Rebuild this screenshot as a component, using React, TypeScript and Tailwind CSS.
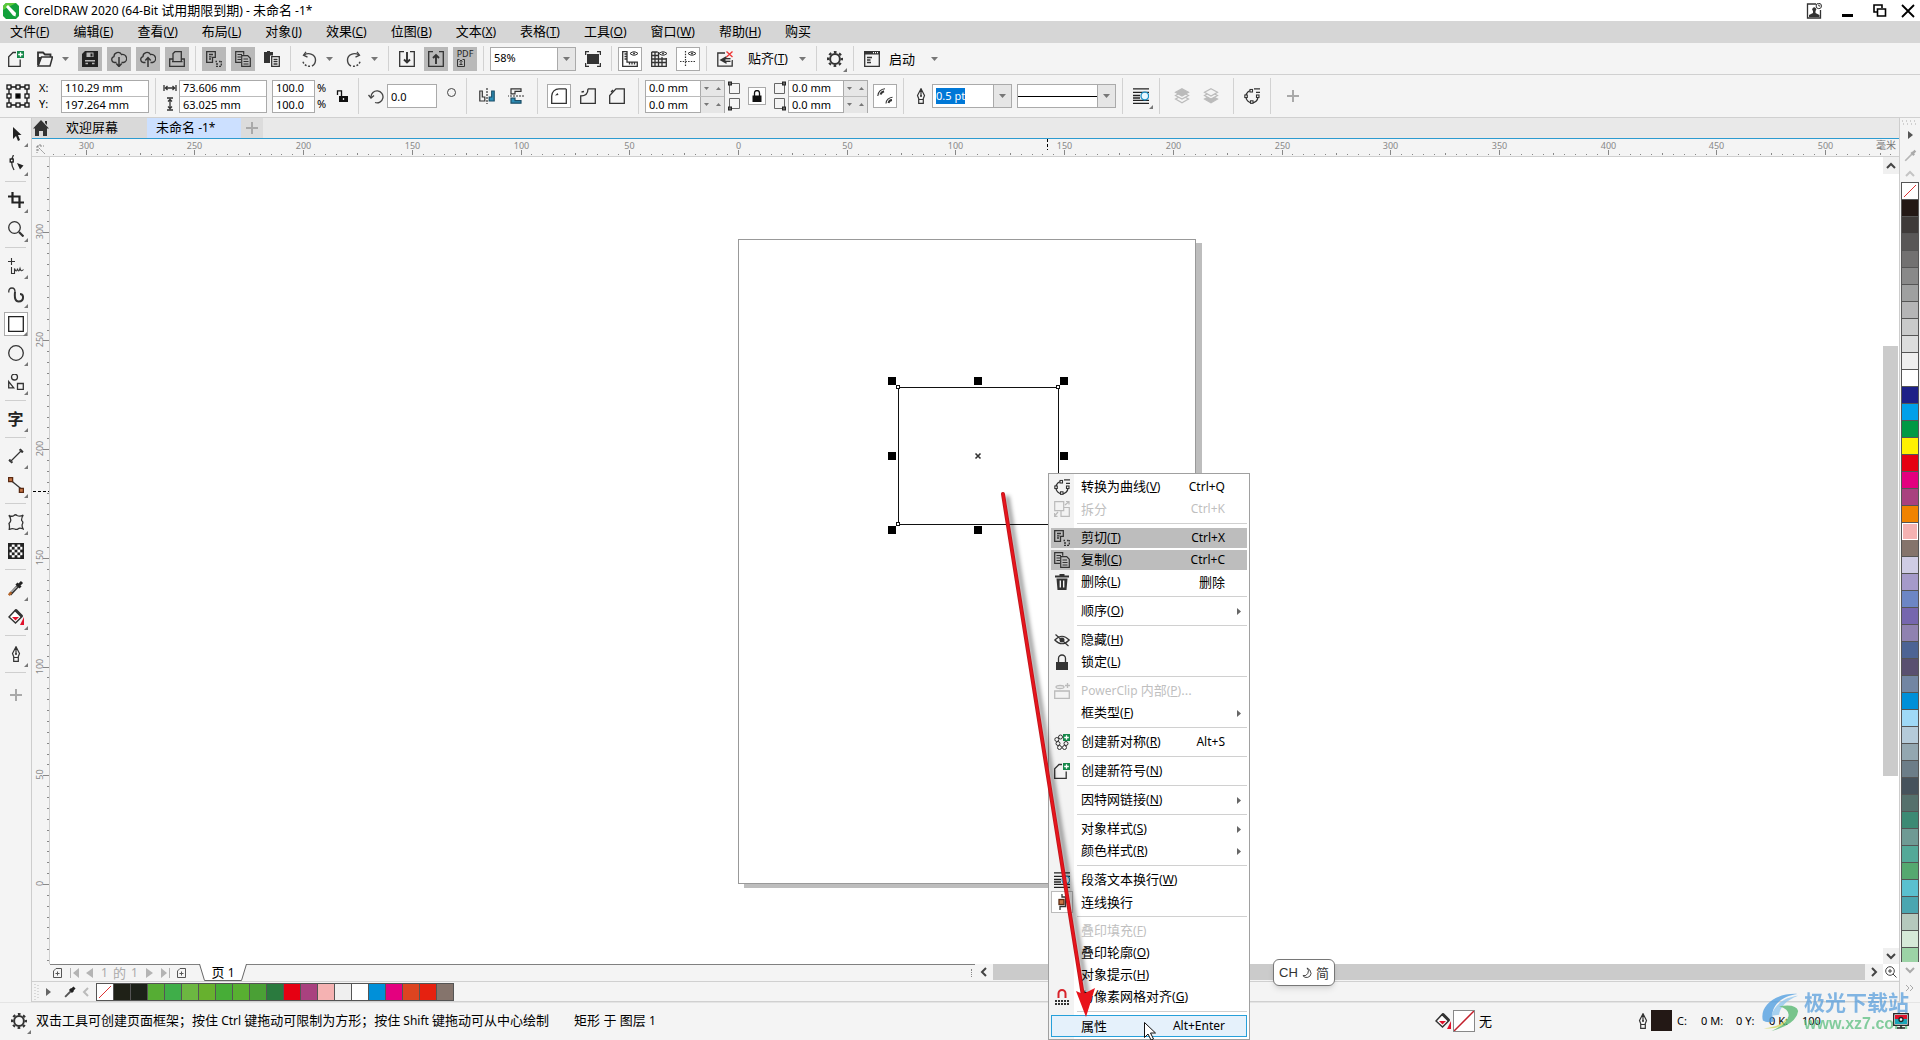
import type { ReactNode } from "react";
import clsx from "clsx";

const DARK = "#333";

function Icon({ size = 16, children }: { size?: number; children: ReactNode }) {
  return (
    <svg
      width={size}
      height={size}
      viewBox={`0 0 ${size} ${size}`}
      fill="none"
      stroke={DARK}
      strokeWidth="1.3"
      className="flex-shrink-0"
      aria-hidden="true"
    >
      {children}
    </svg>
  );
}

function PlusBadge() {
  return (
    <>
      <rect x="9" y="0" width="7" height="7" fill="#16884a" stroke="none" />
      <path d="M12.5 1.2v4.6M10.2 3.5h4.6" stroke="#fff" />
    </>
  );
}

function NewIcon() {
  return (
    <Icon>
      <path d="M8 1.5H5L.7 5.700V15.300h11.500V8.500" />
      <PlusBadge />
    </Icon>
  );
}

function OpenIcon() {
  return (
    <Icon>
      <path d="M1 14V1.5h5l2 2h5.5V6" strokeWidth="1.8" />
      <path d="M1 15L4.5 6H15.5L13 15z" strokeWidth="1.5" />
      <path d="M1 14V6h3.5L2 14z" fill={DARK} stroke="none" />
    </Icon>
  );
}

function SaveIcon() {
  return (
    <Icon>
      <path d="M3 0H16V16H0V3z" fill="#222" stroke="none" />
      <path d="M4.500 1.500h7V6h-7zM3 9h10v1.500H3z" fill="#b9b9b9" stroke="none" />
      <path d="M8.500 2.500h2v3h-2z" fill="#222" stroke="none" />
      <path d="M3.500 12.500h2.500M10 12.500h2.500" stroke="#b9b9b9" />
    </Icon>
  );
}

function CloudIcon({ up }: { up?: boolean }) {
  return (
    <Icon>
      <path d="M5.500 11.500H3.500A3 3 0 0 1 3 5.600 4 4 0 0 1 10.500 3.500 4 4 0 0 1 12.500 11.500H10.500" />
      <path d={up ? "M8 16V7M5.300 9.500L8 6.500l2.700 3" : "M8 6v9M5.300 12.500L8 15.500l2.700-3"} strokeWidth="1.5" />
    </Icon>
  );
}

function PrintIcon() {
  return (
    <Icon>
      <path d="M4 10.500V2.500L6 .7h6.300v9.800M4.500 8H.7v7.300h14.600V8H12.500M3 10.700h10.500" />
    </Icon>
  );
}

function CutIcon() {
  return (
    <Icon>
      <path d="M.7.700h8.600v5.600H6.500v5H.7zM3 3.500h4M3 5.800h2.500M3 8h2" />
      <path d="M9.500 10.500h1.500M13 10.500h1.500M10 15.300h5.300V10M10 13h3" strokeDasharray="2 1" />
    </Icon>
  );
}

function CopyIcon() {
  return (
    <Icon>
      <path d="M6 11.300H.7V.7h8v3M2.500 3.500h4.500M2.500 6h3.500M2.500 8.500h3.500" strokeWidth="1.200" />
      <path d="M6.700 4.700h6l2.600 2.600v8H6.700zM8.500 8h4.500M8.500 10.500h5M8.500 13h5" strokeWidth="1.200" />
    </Icon>
  );
}

function PasteIcon() {
  return (
    <Icon>
      <path d="M0 1h3V0h3v1h3v3.500H6V12H0z" fill={DARK} stroke="none" />
      <path d="M7.700 5.700h7.600v9.600H7.700zM9.500 8.500h4M9.500 10.700h4M9.500 13h4" />
    </Icon>
  );
}

function UndoIcon({ redo }: { redo?: boolean }) {
  return (
    <Icon>
      <g transform={redo ? "matrix(-1 0 0 1 16 0)" : undefined} stroke="#444">
        <path d="M3 4C8 1 14.500 3.500 14.500 9c0 2.500-1.500 5-3.500 6" strokeWidth="1.400" />
        <path d="M9 15.300C5.500 15.500 2.500 13.500 1.500 9.500" strokeWidth="1.400" strokeDasharray="2 1.500" />
        <path d="M5 .8L2.500 4.200l4 2" strokeWidth="1.300" />
      </g>
    </Icon>
  );
}

function ImportIcon({ up }: { up?: boolean }) {
  return (
    <Icon>
      <path d="M5 .7H.7v14.600h14.600V.7H11" />
      <path d={up ? "M8 13V4M5 7l3-3 3 3" : "M8 1v10M5 8.500l3 3 3-3"} strokeWidth="1.900" />
    </Icon>
  );
}

function PdfIcon() {
  return (
    <span className="flex flex-col items-center gap-px text-[9px] leading-[8px] text-[#222]">
      PDF
      <svg width="8" height="8" viewBox="0 0 8 8" fill="none" stroke={DARK} className="mr-2" aria-hidden="true">
        <path d="M2.500.5h-2v7h7v-7h-2M4 6V1M2.500 2.500L4 1l1.500 1.500M2.500 5.500h3" />
      </svg>
    </span>
  );
}

function FitIcon() {
  return (
    <Icon>
      <rect x="2" y="3" width="12" height="10" fill={DARK} stroke="none" />
      <path d="M.6 4V.6H4M12 .6h3.400V4M.6 12v3.400H4M12 15.400h3.400V12" />
    </Icon>
  );
}

function EyeMark() {
  return (
    <>
      <path d="M8 2.500Q12 -1 16 2.500Q12 6 8 2.500z" strokeWidth="1" />
      <circle cx="12" cy="2.500" r="1" fill={DARK} stroke="none" />
    </>
  );
}

function RulersIcon() {
  return (
    <Icon>
      <path d="M.7.700H5v10.500h10.300v4.100H.7zM2.500 3H5M2.500 5.500H5M2.500 8H5M7.500 13.500v-2M10 13.500v-2M12.500 13.500v-2" />
      <EyeMark />
    </Icon>
  );
}

function GridIcon() {
  return (
    <Icon>
      <path d="M.7 1v14.300h14.600V7M4 1v14M7.500 1v14M11 6v9M.7 1h6M.7 4.500h7M.7 8h14.600M.7 11.500h14.600" />
      <EyeMark />
    </Icon>
  );
}

function GuidesIcon() {
  return (
    <Icon>
      <path d="M0 10.500h16M5.500 0v16" strokeDasharray="1.500 1.200" strokeWidth="1.200" />
      <EyeMark />
    </Icon>
  );
}

function SnapOffIcon() {
  return (
    <Icon>
      <path d="M8 2H.8v13.200h14.400V9" />
      <path d="M2.500 9l7-4v2h4v4h-4v2z" fill={DARK} stroke="none" />
      <path d="M8.500 9h6" stroke="#f4f4f4" />
      <path d="M9.500.500l6 5.500M15.500.500l-6 5.500" stroke="#e33" />
    </Icon>
  );
}

function GearIcon() {
  return (
    <Icon>
      <circle cx="8" cy="8" r="4.900" strokeWidth="2" />
      <circle cx="8" cy="8" r="6.900" strokeWidth="2.200" strokeDasharray="2.700 2.720" strokeDashoffset="1.350" />
    </Icon>
  );
}

function LaunchIcon() {
  return (
    <Icon>
      <path d="M.7.700h14.600v14.600H.7z" />
      <path d="M0 0h16v3.500H0z" fill={DARK} stroke="none" />
      <path d="M9 1.700h1M11 1.700h1M13 1.700h1" stroke="#fff" />
      <path d="M3 6.500h5M3 9h3.500M3 11.500h4" />
    </Icon>
  );
}

function OriginIcon() {
  const at = [1, 10, 19];
  return (
    <Icon size={24}>
      <path d="M3 3h18v18H3z" stroke="#111" />
      {at.map((y) =>
        at.map((x) => (
          <rect
            key={`${x}-${y}`}
            x={x}
            y={y}
            width="4"
            height="4"
            stroke="#111"
            fill={x === 10 && y === 10 ? "#000" : "#f4f4f4"}
          />
        )),
      )}
    </Icon>
  );
}

function WidthIcon() {
  return (
    <Icon size={14}>
      <path d="M1 4v6M13 4v6M2 7h10M4.500 5L2.500 7l2 2M9.500 5l2 2-2 2" />
    </Icon>
  );
}

function HeightIcon() {
  return (
    <Icon size={14}>
      <path d="M4 1h6M4 13h6M7 2v10M5 4.500l2-2 2 2M5 9.500l2 2 2-2" />
    </Icon>
  );
}

function LockOpenIcon() {
  return (
    <Icon size={12}>
      <path d="M5.500 6V.8H1.500V5" stroke="#111" />
      <rect x="3" y="6" width="9" height="6" fill="#111" stroke="none" />
      <path d="M7.500 8v2" stroke="#ddd" />
    </Icon>
  );
}

function LockIcon() {
  return (
    <Icon size={12}>
      <path d="M3.500 6V3a2.500 2.500 0 0 1 5 0v3" stroke="#111" />
      <rect x="1.500" y="5.500" width="9" height="6.500" fill="#111" stroke="none" />
    </Icon>
  );
}

function RotateIcon() {
  return (
    <Icon>
      <path d="M3 9A6 6 0 1 1 7 14.500" stroke="#444" />
      <path d="M.5 7L3 10l3-2.500" stroke="#444" />
    </Icon>
  );
}

function MirrorIcon({ vertical }: { vertical?: boolean }) {
  return (
    <Icon>
      <g transform={vertical ? "rotate(90 8 8)" : undefined} strokeWidth="1.200">
        <path d="M.8 3h2.500v6h2.500v4h-5z" />
        <path d="M8 0v16" strokeDasharray="2 1" />
        <path d="M15.200 3h-2.500v6h-2.500v4h5z" fill="#2d8fb8" stroke="#1c4f68" />
      </g>
    </Icon>
  );
}

function CornerIcon({ kind }: { kind: "round" | "scallop" | "chamfer" }) {
  return (
    <Icon>
      {kind === "round" && (
        <>
          <path d="M15.300 1v14.300H.7V8A7.300 7.300 0 0 1 8 .8h7.300" />
          <path d="M4 7.500L7.500 7 6.500 5z" fill={DARK} stroke="none" />
        </>
      )}
      {kind === "scallop" && <path d="M8 .8h7.300v14.500H.7V8Q8 8 8 .8M1.500 4l2.500-.5" />}
      {kind === "chamfer" && <path d="M7 .8h8.300v14.500H.7V7.500zM2 4l2-2" />}
    </Icon>
  );
}

function CornerPair({ side }: { side: "left" | "right" }) {
  const x = side === "left" ? 0.5 : 9.5;
  return (
    <svg width="13" height="32" viewBox="0 0 13 32" fill="none" stroke="#666" className="flex-shrink-0" aria-hidden="true">
      <path d="M1.500 3.500h10v10h-10zM1.500 18.500h10v10h-10z" />
      <rect x={x} y="2" width="3" height="3" fill="#666" stroke="#222" />
      <rect x={x} y="27" width="3" height="3" fill="#666" stroke="#222" />
    </svg>
  );
}

function RelativeCornerIcon() {
  return (
    <Icon>
      <path d="M.8 8C1 4 4 1 8 .8" strokeWidth="1.100" />
      <path d="M3.500 6.500C4 4.800 5 3.800 7 3.200" strokeWidth="2.200" />
      <path d="M9 15.500c0-3.500 3-6 6.500-6.300" strokeWidth="1.100" />
      <path d="M11.500 15c.300-1.500 1.500-2.800 3.500-3" strokeWidth="1.800" />
    </Icon>
  );
}

function PenNibIcon() {
  return (
    <Icon>
      <path d="M8 .7L4.500 7.500l1.500 4h4l1.500-4zM8 1v7M5.700 11.500h4.600v3.800H5.700z" strokeWidth="1.200" />
      <circle cx="8" cy="8" r="1" fill={DARK} stroke="none" />
    </Icon>
  );
}

function WrapIcon({ faded }: { faded?: boolean }) {
  return (
    <Icon>
      <path d="M0 .8h16M0 4.300h16M0 7.500h7M0 10h7M0 12.300h16M0 15.300h16" stroke="#222" />
      <circle cx="11.800" cy="8" r="3.800" fill={faded ? "#eef6fb" : "#e8f7ff"} stroke="#1c8fc4" />
    </Icon>
  );
}

function LayerIcon({ top }: { top?: boolean }) {
  return (
    <Icon>
      <g stroke="#bbb" strokeWidth="1.200">
        <path d="M8 7.500l6.500 3.500L8 14.800 1.500 11z" fill={top ? "none" : "#bbb"} />
        <path d="M8 4l6.500 3.500L8 11 1.500 7.500z" fill="#f4f4f4" />
        <path d="M8 .800l6.500 3.500L8 8 1.500 4.300z" fill={top ? "#bbb" : "#f4f4f4"} />
      </g>
    </Icon>
  );
}

function CurvesIcon() {
  return (
    <Icon>
      <path d="M9 2.500A6 6 0 0 0 2 8.500a6 6 0 0 0 12 .5" />
      <path d="M10 .8h6M12 4.300h4" strokeWidth="1.200" />
      <g fill="#fff" strokeWidth="1.100">
        <rect x="6" y="1.500" width="2.500" height="2.500" />
        <rect x=".8" y="7" width="2.500" height="2.500" />
        <rect x="12.500" y="7" width="2.500" height="2.500" />
        <rect x="6.500" y="12.800" width="2.500" height="2.500" />
      </g>
    </Icon>
  );
}

function PlusIcon() {
  return (
    <Icon size={12}>
      <path d="M6 0v12M0 6h12" stroke="#a9a9a9" strokeWidth="2" />
    </Icon>
  );
}

function EyedropperIcon() {
  return (
    <Icon size={16}>
      <path d="M2 14.500L10 6" strokeWidth="3" />
      <path d="M3.500 12L9 6.500" stroke="#fff" strokeWidth="1" />
      <path d="M.8 15.200l2.500-3" stroke="#b5652a" strokeWidth="2.500" />
      <path d="M8.500 3.500l4 4M11 5l3-3" stroke="#222" strokeWidth="3" />
    </Icon>
  );
}

function BucketIcon() {
  return (
    <Icon>
      <path d="M7.500 1L14 7.500 7.500 14 1 8z" fill="#fff" strokeWidth="1.500" />
      <path d="M7.500 1L14 7.500" strokeWidth="3" />
      <path d="M4 8h7l-3.500 3.500z" fill="#e0112b" stroke="none" />
      <path d="M16 8v8h-4z" fill="#e0112b" stroke="none" />
    </Icon>
  );
}

// toolbox glyphs, in drawing order
const toolIcons = {
  pick: <path d="M5 1v12l3-3 2 5 2-1-2-5h3.500z" fill="#222" stroke="none" />,
  shape: (
    <>
      <path d="M5.500 0Q1.500 7 6 15" />
      <rect x="2.200" y="4" width="3" height="3" fill="#fff" stroke="#111" />
      <path d="M9 8l6.500 2.500-3.500 4z" fill="#222" stroke="none" />
    </>
  ),
  crop: <path d="M0 4.500h11.500V16M4.500 0v10.500H16" stroke="#222" strokeWidth="2.200" />,
  zoom: (
    <>
      <circle cx="6.500" cy="6.500" r="5.800" />
      <path d="M11 11l4.500 4.500" strokeWidth="2.200" />
    </>
  ),
  freehand: <path d="M3.500 0v7M0 3.500h7M3.500 9v6.500h3v-5q2 5 3 0q1 5 2.500 0q1 4 3.500 1" strokeWidth="1.100" />,
  artistic: (
    <>
      <path d="M.8 5.500Q.5 1 4 1q3 0 3 4" />
      <path d="M7 5q-1 9.500 3.500 9.500 5 0 4.500-5-.5-2.500-3-2.500" strokeWidth="2" />
    </>
  ),
  rectangle: <path d="M.7.700h14.600v14.600H.7z" stroke="#222" />,
  ellipse: <circle cx="8" cy="8" r="7.300" />,
  polygon: (
    <>
      <circle cx="6.500" cy="3" r="3" />
      <path d="M.7 7.500v6.300h5zM9.500 9.500h5.800v5.800H9.500z" />
    </>
  ),
  dimension: <path d="M2.500 13.500l11-11M.8 12l3.200 3.200M12 .8L15.200 4M2 14v-3M2 14h3M14 2v3M14 2h-3" strokeWidth="1.200" />,
  connector: (
    <>
      <path d="M3 3.500l11 9" />
      <g fill="#c87545" stroke="#5a2a12">
        <rect x=".6" y=".6" width="4" height="4" />
        <rect x="11.400" y="11.400" width="4" height="4" />
      </g>
    </>
  ),
  envelope: (
    <path d="M.8 1.200q3 2 5.200.300 1.500-1.500 3 0 3 1.500 6.200-.5-2 3.500-1.500 5.500 2 1.500.500 4-.500 2 1 4.500-3.500-1.500-5-.300-1.500 1.500-3.500.300-2.500-1-5.500.500Q1.800 12 1 9.500 3.500 7 2.500 5 2.500 3 .8 1.200z" />
  ),
  transparency: (
    <>
      <path d="M.8.800h14.400v14.400H.8z" fill="#fff" stroke="#222" strokeWidth="1.600" />
      {[0, 1, 2, 3, 4].map((r) =>
        [0, 1, 2, 3, 4].map(
          (c) =>
            (r + c) % 2 === 0 && (
              <rect key={`${r}${c}`} x={1 + c * 2.8} y={1 + r * 2.8} width="2.800" height="2.800" fill="#222" stroke="none" />
            ),
        ),
      )}
    </>
  ),
};

function Caret() {
  return (
    <svg width="7" height="4" viewBox="0 0 7 4" className="flex-shrink-0" aria-hidden="true">
      <path d="M0 0h7L3.500 4z" fill="#777" />
    </svg>
  );
}

function CaretButton({ label }: { label: string }) {
  return (
    <button aria-label={label} className="flex h-6 w-[11px] items-center">
      <Caret />
    </button>
  );
}

function Sep() {
  return (
    <span className="flex w-[3px] flex-shrink-0 justify-center self-stretch py-[3px]">
      <span className="w-px bg-[#d2d2d2]" />
    </span>
  );
}

function Tool({
  label,
  state = "plain",
  flyout,
  children,
}: {
  label: string;
  state?: "plain" | "shaded" | "pressed";
  flyout?: boolean;
  children: ReactNode;
}) {
  return (
    <button
      aria-label={label}
      title={label}
      className={clsx(
        "relative flex h-6 w-6 flex-shrink-0 items-center justify-center",
        state === "shaded" && "bg-[#b9b9b9]",
        state === "pressed" && "border border-[#aaa] bg-white",
      )}
    >
      {children}
      {flyout && (
        <svg width="4" height="4" viewBox="0 0 4 4" className="absolute -bottom-px right-0" aria-hidden="true">
          <path d="M4 0v4H0z" fill="#777" />
        </svg>
      )}
    </button>
  );
}

function Mnemonic({ k }: { k: string }) {
  return (
    <span className="text-[12px]">
      (<span className="underline underline-offset-1">{k}</span>)
    </span>
  );
}

function TitleBar() {
  return (
    <header className="flex h-[21px] flex-shrink-0 items-center bg-white pl-[3px] pr-[5px]">
      <svg width="16" height="16" viewBox="0 0 16 16" aria-hidden="true">
        <path d="M3 0h10l3 3v10l-3 3H3l-3-3V3z" fill="#12a03c" />
        <path d="M0 7V3l3-3h10z" fill="#5cc83a" />
        <path d="M3 4l2-2 8 8-.5 3.500L10 12.500z" fill="#fff" />
      </svg>
      <h1 className="ml-[5px] flex-1 whitespace-pre pb-px text-[13px] leading-5">
        <span className="text-[12px]">CorelDRAW 2020 (64-Bit </span>试用期限到期
        <span className="text-[12px]">) - </span>未命名<span className="text-[12px]"> -1*</span>
      </h1>
      <div className="flex items-center">
        <button aria-label="账户" className="mr-[19px]">
          <Icon>
            <path d="M10 1H1.500v14h13V7" />
            <path d="M3 14v-2l4-2V8a2 2 0 1 1 2.500 0v2l4 2v2z" fill={DARK} stroke="none" />
            <circle cx="12.800" cy="3" r="2.700" strokeWidth="1" />
            <path d="M12.800 1.500V3h1.500" strokeWidth="1" />
          </Icon>
        </button>
        <button aria-label="最小化" className="mr-5 flex h-4 w-3 items-end justify-center pb-[2px]">
          <span className="h-[3px] w-[11px] bg-black" />
        </button>
        <button aria-label="还原" className="mr-[14px]">
          <Icon size={14}>
            <path d="M4.500 8H1V1h8v3M4.500 5h8v7h-8z" stroke="#000" strokeWidth="1.600" />
          </Icon>
        </button>
        <button aria-label="关闭">
          <Icon size={14}>
            <path d="M1 1l12 12M13 1L1 13" stroke="#000" strokeWidth="1.800" />
          </Icon>
        </button>
      </div>
    </header>
  );
}

const menus = [
  ["文件", "F"],
  ["编辑", "E"],
  ["查看", "V"],
  ["布局", "L"],
  ["对象", "J"],
  ["效果", "C"],
  ["位图", "B"],
  ["文本", "X"],
  ["表格", "T"],
  ["工具", "O"],
  ["窗口", "W"],
  ["帮助", "H"],
  ["购买", ""],
];

function MenuBar() {
  return (
    <nav className="flex h-[22px] flex-shrink-0 items-center gap-6 bg-[#d6d6d6] pb-[2px] pl-[10px] text-[13px]">
      {menus.map(([name, key]) => (
        <button key={name} className="whitespace-nowrap leading-5">
          {name}
          {key && <Mnemonic k={key} />}
        </button>
      ))}
    </nav>
  );
}

function StandardBar() {
  return (
    <div className="flex h-8 flex-shrink-0 items-center gap-[5px] border-b border-[#d0d0d0] pl-1 text-[13px]">
      <Tool label="新建"><NewIcon /></Tool>
      <Tool label="打开"><OpenIcon /></Tool>
      <CaretButton label="最近的文件" />
      <Tool label="保存" state="shaded"><SaveIcon /></Tool>
      <Tool label="从云下载" state="shaded"><CloudIcon /></Tool>
      <Tool label="上传到云" state="shaded"><CloudIcon up /></Tool>
      <Tool label="打印" state="shaded"><PrintIcon /></Tool>
      <Sep />
      <Tool label="剪切" state="shaded"><CutIcon /></Tool>
      <Tool label="复制" state="shaded"><CopyIcon /></Tool>
      <Tool label="粘贴"><PasteIcon /></Tool>
      <Sep />
      <Tool label="撤消"><UndoIcon /></Tool>
      <CaretButton label="撤消列表" />
      <Tool label="重做"><UndoIcon redo /></Tool>
      <CaretButton label="重做列表" />
      <Sep />
      <Tool label="导入"><ImportIcon /></Tool>
      <Tool label="导出" state="shaded"><ImportIcon up /></Tool>
      <Tool label="发布为 PDF" state="shaded"><PdfIcon /></Tool>
      <Sep />
      <div className="relative h-6 w-[86px] flex-shrink-0 border border-[#aaa] bg-white">
        <select
          aria-label="缩放级别"
          defaultValue="58%"
          className="h-full w-full appearance-none pl-[3px] text-[11px] outline-none"
        >
          <option>58%</option>
          <option>100%</option>
        </select>
        <ComboArrow />
      </div>
      <Tool label="全屏预览"><FitIcon /></Tool>
      <Sep />
      <Tool label="标尺" state="pressed"><RulersIcon /></Tool>
      <Tool label="网格"><GridIcon /></Tool>
      <Tool label="辅助线" state="pressed"><GuidesIcon /></Tool>
      <Sep />
      <Tool label="关闭贴齐"><SnapOffIcon /></Tool>
      <button className="whitespace-nowrap px-[6px] leading-5">
        贴齐<Mnemonic k="T" />
      </button>
      <CaretButton label="贴齐选项" />
      <Sep />
      <Tool label="选项" flyout><GearIcon /></Tool>
      <Sep />
      <Tool label="启动器"><LaunchIcon /></Tool>
      <button className="w-[37px] text-left leading-5">启动</button>
      <CaretButton label="启动列表" />
    </div>
  );
}

function ComboArrow() {
  return (
    <span className="pointer-events-none absolute inset-y-0 right-0 flex w-[18px] items-center justify-center border-l border-[#aaa] bg-[#e6e6e6]">
      <Caret />
    </span>
  );
}

function StackedInputs({ labels, values, className }: { labels: string[]; values: string[]; className: string }) {
  return (
    <div className={clsx("flex h-[33px] flex-shrink-0 flex-col divide-y divide-[#bbb] border border-[#aaa] bg-white", className)}>
      {values.map((v, i) => (
        <input
          key={labels[i]}
          aria-label={labels[i]}
          defaultValue={v}
          className="h-4 w-full min-w-0 pl-[3px] text-[11px] leading-4 outline-none"
        />
      ))}
    </div>
  );
}

function SpinPair({ labels }: { labels: string[] }) {
  return (
    <div className="flex h-[33px] w-20 flex-shrink-0 flex-col divide-y divide-[#bbb] border border-[#aaa] bg-white">
      {labels.map((l) => (
        <div key={l} className="flex h-4">
          <input aria-label={l} defaultValue="0.0 mm" className="w-0 flex-1 pl-[3px] text-[11px] leading-4 outline-none" />
          <div className="flex w-6 items-center justify-around border-l border-[#aaa] bg-[#e6e6e6]">
            <button aria-label={`${l} 减小`}>
              <svg width="5" height="3" viewBox="0 0 5 3" aria-hidden="true"><path d="M0 0h5L2.500 3z" fill="#777" /></svg>
            </button>
            <button aria-label={`${l} 增大`}>
              <svg width="5" height="3" viewBox="0 0 5 3" aria-hidden="true"><path d="M0 3h5L2.500 0z" fill="#777" /></svg>
            </button>
          </div>
        </div>
      ))}
    </div>
  );
}

function PropertyBar() {
  return (
    <div className="flex h-[43px] flex-shrink-0 items-center gap-[5px] border-b border-[#d0d0d0] pl-[6px] text-[11px]">
      <button aria-label="对象原点"><OriginIcon /></button>
      <div className="flex w-[21px] flex-col pl-1 leading-4">
        <span>X:</span>
        <span>Y:</span>
      </div>
      <StackedInputs labels={["X", "Y"]} values={["110.29 mm", "197.264 mm"]} className="w-[88px]" />
      <Sep />
      <div className="flex gap-[2px]">
        <div className="flex w-[15px] flex-col items-center justify-around">
          <WidthIcon />
          <HeightIcon />
        </div>
        <StackedInputs labels={["宽度", "高度"]} values={["73.606 mm", "63.025 mm"]} className="w-[88px]" />
      </div>
      <div className="flex gap-[2px]">
        <StackedInputs labels={["水平缩放", "垂直缩放"]} values={["100.0", "100.0"]} className="w-[43px]" />
        <div className="w-[10px] leading-4">
          <div>%</div>
          <div>%</div>
        </div>
      </div>
      <button aria-label="锁定比率" className="flex w-5 justify-center"><LockOpenIcon /></button>
      <Sep />
      <label className="flex items-center">
        <span className="flex w-[22px] justify-center"><RotateIcon /></span>
        <input aria-label="旋转角度" defaultValue="0.0" className="h-6 w-[50px] border border-[#aaa] bg-white pl-[3px] outline-none" />
      </label>
      <span className="flex w-[18px] justify-center pb-2">
        <span className="h-[9px] w-[9px] rounded-full border border-[#444]" />
      </span>
      <Sep />
      <div className="flex gap-[5px] pl-[2px] pr-[3px]">
        <Tool label="水平镜像"><MirrorIcon /></Tool>
        <Tool label="垂直镜像"><MirrorIcon vertical /></Tool>
      </div>
      <Sep />
      <div className="flex gap-[5px] px-[3px]">
        <Tool label="圆角" state="pressed"><CornerIcon kind="round" /></Tool>
        <Tool label="扇形角"><CornerIcon kind="scallop" /></Tool>
        <Tool label="倒棱角"><CornerIcon kind="chamfer" /></Tool>
      </div>
      <Sep />
      <div className="flex gap-[3px]">
        <SpinPair labels={["左上圆角", "左下圆角"]} />
        <CornerPair side="left" />
      </div>
      <div className="flex w-[22px] justify-center">
        <button aria-label="同时编辑所有角" className="flex h-[18px] w-[18px] items-center justify-center border border-[#aaa] bg-white">
          <LockIcon />
        </button>
      </div>
      <div className="flex gap-[2px]">
        <CornerPair side="right" />
        <SpinPair labels={["右上圆角", "右下圆角"]} />
      </div>
      <Tool label="相对角缩放" state="pressed"><RelativeCornerIcon /></Tool>
      <Sep />
      <label className="flex items-center">
        <span className="flex w-[22px] justify-center"><PenNibIcon /></span>
        <span className="relative flex h-6 w-20 border border-[#aaa] bg-white">
          <input
            aria-label="轮廓宽度"
            defaultValue="0.5 pt"
            autoFocus
            onFocus={(e) => e.target.select()}
            className="w-full pl-[3px] text-[11px] outline-none selection:bg-[#0078d7] selection:text-white"
          />
          <ComboArrow />
        </span>
      </label>
      <div className="relative h-6 w-[99px] border border-[#aaa] bg-white">
        <select aria-label="线条样式" className="h-full w-full appearance-none outline-none" />
        <span className="pointer-events-none absolute inset-x-0 top-[11px] h-px bg-black" />
        <ComboArrow />
      </div>
      <Sep />
      <Tool label="文本换行" flyout><WrapIcon /></Tool>
      <Sep />
      <div className="flex gap-[5px] px-1">
        <Tool label="到图层前面"><LayerIcon top /></Tool>
        <Tool label="到图层后面"><LayerIcon /></Tool>
      </div>
      <Sep />
      <Tool label="转换为曲线"><CurvesIcon /></Tool>
      <Sep />
      <button aria-label="自定义" className="flex w-8 justify-center"><PlusIcon /></button>
    </div>
  );
}

const tools: { name: string; icon?: ReactNode; flyout?: boolean; active?: boolean }[][] = [
  [
    { name: "选择", icon: toolIcons.pick, flyout: true },
    { name: "形状", icon: toolIcons.shape, flyout: true },
  ],
  [
    { name: "裁剪", icon: toolIcons.crop, flyout: true },
    { name: "缩放", icon: toolIcons.zoom, flyout: true },
  ],
  [
    { name: "手绘", icon: toolIcons.freehand, flyout: true },
    { name: "艺术笔", icon: toolIcons.artistic, flyout: true },
    { name: "矩形", icon: toolIcons.rectangle, flyout: true, active: true },
    { name: "椭圆形", icon: toolIcons.ellipse, flyout: true },
    { name: "多边形", icon: toolIcons.polygon, flyout: true },
  ],
  [{ name: "文本", flyout: true }],
  [
    { name: "平行度量", icon: toolIcons.dimension, flyout: true },
    { name: "连接器", icon: toolIcons.connector, flyout: true },
  ],
  [
    { name: "封套", icon: toolIcons.envelope, flyout: true },
    { name: "透明度", icon: toolIcons.transparency },
  ],
];

function ToolSep() {
  return (
    <span className="flex h-[3px] w-full flex-col justify-center px-[5px]">
      <span className="h-px bg-[#cfcfcf]" />
    </span>
  );
}

function Toolbox() {
  return (
    <aside className="flex w-8 flex-shrink-0 flex-col items-center gap-[5px] border-r border-[#cdcdcd] pt-1">
      {tools.map((group, i) => (
        <div key={i} className="contents">
          {group.map((t) => (
            <Tool key={t.name} label={t.name} flyout={t.flyout} state={t.active ? "pressed" : "plain"}>
              {t.icon ? <Icon>{t.icon}</Icon> : <span className="text-[16px] font-bold leading-6 text-[#222]">字</span>}
            </Tool>
          ))}
          <ToolSep />
        </div>
      ))}
      <Tool label="颜色滴管" flyout><EyedropperIcon /></Tool>
      <Tool label="交互式填充" flyout><BucketIcon /></Tool>
      <ToolSep />
      <Tool label="轮廓笔" flyout><PenNibIcon /></Tool>
      <ToolSep />
      <button aria-label="自定义工具箱" className="flex h-8 w-6 items-center justify-center"><PlusIcon /></button>
    </aside>
  );
}

function DocTabs() {
  return (
    <div className="flex h-[21px] flex-shrink-0 border-b border-[#2d9bd0] bg-[#e9e9e9] text-[13px] leading-[18px]">
      <button aria-label="主页" className="flex w-[18px] items-center justify-center bg-[#dcdcdc]">
        <svg width="16" height="16" viewBox="0 0 16 16" fill={DARK} aria-hidden="true">
          <path d="M8 0l8 8.500h-2V16h-4v-5H6v5H2V8.500H0zM12 1h2v4l-2-2z" />
        </svg>
      </button>
      <button className="w-[97px] bg-[#d9d9d9] pb-[2px] pl-4 text-left">欢迎屏幕</button>
      <button className="w-[94px] bg-[#cce0ff] pb-[2px] pl-[9px] text-left">
        未命名<span className="whitespace-pre text-[12px]"> -1*</span>
      </button>
      <button aria-label="新建文档" className="flex w-[22px] items-center justify-center bg-[#dcdcdc]">
        <PlusIcon />
      </button>
    </div>
  );
}

const PX_PER_MM = 2.1744;

const range = (from: number, to: number, step: number) =>
  Array.from({ length: Math.floor((to - from) / step) + 1 }, (_, i) => from + i * step);

function HorizontalRuler() {
  const pos = (mm: number) => Math.round(706 + mm * PX_PER_MM) + 0.5;
  return (
    <div className="flex h-[18px] flex-shrink-0 border-b border-[#cfcfcf]">
      <svg className="h-[17px] w-full" aria-label="水平标尺">
        <path d="M5 7h7M5 7v7M5 7l8 8M8 5v2M5 11h2" stroke="#888" fill="none" strokeDasharray="2 1" />
        {range(-315, 530, 5).map((mm) => (
          <path key={mm} d={`M${pos(mm)} ${mm % 50 === 0 ? 11 : mm % 25 === 0 ? 14 : 15}V16`} stroke="#888" />
        ))}
        {range(-300, 500, 50).map((mm) => (
          <text key={mm} x={pos(mm)} y="10" textAnchor="middle" fontSize="9" fill="#888">
            {Math.abs(mm)}
          </text>
        ))}
        <text x="1844" y="10" fontSize="10" fill="#777">毫米</text>
        <path d="M1015.500 0v11" stroke="#000" strokeDasharray="3 2" />
      </svg>
    </div>
  );
}

function VerticalRuler() {
  const pos = (mm: number) => Math.round(728 - mm * PX_PER_MM) - 0.5;
  return (
    <div className="w-[18px] flex-shrink-0 border-r border-[#cfcfcf]">
      <svg className="h-full w-full" aria-label="垂直标尺">
        {range(-60, 330, 5).map((mm) => (
          <path key={mm} d={`M${mm % 50 === 0 ? 11 : 15} ${pos(mm)}H17`} stroke="#888" />
        ))}
        {range(0, 300, 50).map((mm) => (
          <text key={mm} transform={`translate(11 ${pos(mm) - 1}) rotate(-90)`} textAnchor="middle" fontSize="9" fill="#888">
            {mm}
          </text>
        ))}
        <path d="M1 334.500h16" stroke="#000" strokeDasharray="3 2" />
      </svg>
    </div>
  );
}

// the sheet and the selected rectangle sit at free positions on the pasteboard
function Canvas() {
  const xs = [842, 928, 1014];
  const ys = [224, 299, 373];
  return (
    <main className="relative min-w-0 flex-1 overflow-hidden bg-white">
      <div className="absolute left-[694px] top-[86px] h-[645px] w-[458px] bg-[#bdbdbd]" />
      <div className="absolute left-[688px] top-[82px] h-[645px] w-[458px] border border-[#999] bg-white" />
      <svg className="absolute inset-0 h-full w-full" fill="none" aria-label="矩形">
        <path d="M848.500 230.500h160v137h-160z" stroke="#111" />
        {xs.map((x, c) =>
          ys.map((y, r) =>
            c === 1 && r === 1 ? (
              <path key="mid" d={`M${x - 2.5} ${y - 2.5}l5 5m0-5l-5 5`} stroke="#333" strokeWidth="1.600" />
            ) : (
              <rect key={`${x}-${y}`} x={x - 4} y={y - 4} width="8" height="8" fill="#000" />
            ),
          ),
        )}
        <g fill="#fff" stroke="#111">
          <rect x="846.500" y="228.500" width="3" height="3" />
          <rect x="1006.500" y="228.500" width="3" height="3" />
          <rect x="846.500" y="365.500" width="3" height="3" />
        </g>
      </svg>
    </main>
  );
}

function Chevron({ dir, color = "#444" }: { dir: "up" | "down" | "left" | "right"; color?: string }) {
  const d = { up: "M1 7l4-4 4 4", down: "M1 3l4 4 4-4", left: "M7 1L3 5l4 4", right: "M3 1l4 4-4 4" }[dir];
  return (
    <svg width="10" height="10" viewBox="0 0 10 10" fill="none" stroke={color} strokeWidth="2" aria-hidden="true">
      <path d={d} />
    </svg>
  );
}

function VerticalScroll() {
  return (
    <div className="flex w-4 flex-shrink-0 flex-col bg-white">
      <button aria-label="向上滚动" className="flex h-[17px] items-center justify-center bg-[#f0f0f0]"><Chevron dir="up" /></button>
      <div className="flex-[172]" />
      <div className="mr-px flex-[430] bg-[#cbcbcb]" />
      <div className="flex-[172]" />
      <button aria-label="向下滚动" className="flex h-4 items-center justify-center bg-[#f0f0f0]"><Chevron dir="down" /></button>
    </div>
  );
}

function PageNavIcon({ d }: { d: string }) {
  return (
    <svg width="10" height="10" viewBox="0 0 10 10" fill="#b4b4b4" aria-hidden="true">
      <path d={d} />
    </svg>
  );
}

function AddPageIcon() {
  return (
    <svg width="9" height="10" viewBox="0 0 9 10" fill="none" stroke="#555" aria-hidden="true">
      <path d="M3 .5h5.500v9h-8V3zM4.500 3.500v4M2.500 5.500h4" />
    </svg>
  );
}

function PageBar() {
  return (
    <div className="ml-[18px] flex h-[17px] flex-shrink-0">
      <div className="relative flex w-1/2 items-center border-t border-[#808080] pl-[3px] text-[12px] leading-4 text-[#aaa]">
        <button aria-label="在前添加页" className="w-4"><AddPageIcon /></button>
        <button aria-label="首页" className="w-4"><PageNavIcon d="M1 0h1v10H1zM10 0v10L4 5z" /></button>
        <button aria-label="上一页" className="w-4"><PageNavIcon d="M8 0v10L1 5z" /></button>
        <span className="w-3">1</span>
        <span className="w-[18px] text-[13px]">的</span>
        <span className="w-[14px]">1</span>
        <button aria-label="下一页" className="w-4"><PageNavIcon d="M1 0l7 5-7 5z" /></button>
        <button aria-label="尾页" className="w-4"><PageNavIcon d="M0 0l6 5-6 5zM8 0h1v10H8z" /></button>
        <button aria-label="在后添加页" className="w-[22px]"><AddPageIcon /></button>
        <button className="relative -mt-px flex h-[17px] w-[48px] items-center justify-center text-[13px] text-black">
          <svg width="48" height="17" viewBox="0 0 48 17" className="absolute inset-0" aria-hidden="true">
            <path d="M.5 0L5.500 16.500h37L47.500 0" fill="#fff" stroke="#666" />
          </svg>
          <span className="relative whitespace-pre">页<span className="text-[12px]"> 1</span></span>
        </button>
        <span className="ml-auto mr-[2px] h-2 w-[2px] border-l border-dotted border-[#888]" />
      </div>
      <div className="flex w-1/2 pb-px">
        <button aria-label="向左滚动" className="flex w-[18px] items-center justify-center"><Chevron dir="left" /></button>
        <div className="flex-1 bg-[#cbcbcb]" />
        <button aria-label="向右滚动" className="flex w-[18px] items-center justify-center bg-[#f0f0f0]"><Chevron dir="right" /></button>
        <button aria-label="导航器" className="flex w-4 items-center justify-center bg-white">
          <svg width="12" height="12" viewBox="0 0 12 12" fill="none" stroke="#444" aria-hidden="true">
            <circle cx="5" cy="5" r="4.300" />
            <path d="M8 8l3.500 3.500M5 3v4M3 5h4" />
          </svg>
        </button>
      </div>
    </div>
  );
}

const docColors = [
  "none", "#1f2117", "#1c2119", "#56ad34", "#3fae49", "#6cb741", "#67b12e", "#47ad37", "#58b031", "#4aa035", "#2a7a3e",
  "#e60012", "#a9417f", "#f5b2b2", "#efefef", "#ffffff", "#0090d9", "#e4007f", "#dd4420", "#e62110", "#85746c",
];

const paletteColors = [
  "none", "#231815", "#3e3a39", "#595757", "#727171", "#898989", "#9fa0a0", "#b5b5b6", "#c9caca", "#dcdddd", "#efefef",
  "#ffffff", "#1d2088", "#00a0e9", "#009944", "#fff100", "#e60012", "#e4007f", "#a9417f", "#f08300", "#f5b2b2",
  "#85746c", "#cfcce5", "#a59aca", "#6c86c4", "#7667ae", "#8f82b0", "#4d6494", "#595070", "#7286a3", "#0090d9",
  "#9fd9f6", "#b5cbd9", "#93a7b0", "#6c7d88", "#46525c", "#55706c", "#3c8a74", "#6f9a94", "#54a998", "#55a870",
  "#5bc0cf", "#4ba6b0", "#b5c9bd", "#d6e9d8", "#9cd3a6",
];

function NoColor() {
  return (
    <svg viewBox="0 0 16 16" className="h-full w-full bg-white" aria-hidden="true">
      <path d="M2 14L14 2" stroke="#d33" />
    </svg>
  );
}

function DocPalette() {
  return (
    <div className="flex h-[21px] flex-shrink-0 items-center border-y border-[#d0d0d0]">
      <svg width="6" height="16" viewBox="0 0 6 16" className="ml-[2px]" aria-hidden="true">
        <path d="M1 0v16M4 1v15" stroke="#bbb" strokeDasharray="1 2" />
      </svg>
      <button aria-label="调色板选项" className="w-6 pl-[6px]">
        <svg width="5" height="8" viewBox="0 0 5 8" aria-hidden="true"><path d="M0 0l5 4-5 4z" fill="#666" /></svg>
      </button>
      <button aria-label="滴管" className="w-[17px] pr-px">
        <svg width="12" height="12" viewBox="0 0 16 16" fill="none" aria-hidden="true">
          <path d="M1.500 14.500L9 7" stroke="#555" strokeWidth="2.500" />
          <path d="M8 4l4 4M10.500 5.500L14 2" stroke="#222" strokeWidth="4" />
        </svg>
      </button>
      <button aria-label="向左" className="w-[15px]"><Chevron dir="left" color="#bbb" /></button>
      <div className="flex h-[18px] border border-[#555]">
        {docColors.map((c, i) => (
          <button
            key={i}
            aria-label={c}
            className={clsx("h-4", i === docColors.length - 1 ? "w-4" : "w-[17px] border-r border-[#555]")}
            style={{ background: c === "none" ? "#fff" : c }}
          >
            {c === "none" && <NoColor />}
          </button>
        ))}
      </div>
    </div>
  );
}

function ColorPalette() {
  return (
    <aside className="flex w-[21px] flex-shrink-0 flex-col items-center border-l border-[#cdcdcd]">
      <svg width="16" height="6" viewBox="0 0 16 6" className="mt-[2px]" aria-hidden="true">
        <path d="M0 1h16M1 4h15" stroke="#aaa" strokeDasharray="1 3" />
      </svg>
      <button aria-label="调色板选项" className="flex h-[18px] items-center">
        <svg width="5" height="8" viewBox="0 0 5 8" aria-hidden="true"><path d="M0 0l5 4-5 4z" fill="#555" /></svg>
      </button>
      <button aria-label="滴管" className="flex h-[22px] items-center">
        <svg width="13" height="13" viewBox="0 0 16 16" fill="none" aria-hidden="true">
          <path d="M1.500 14.500L10 6" stroke="#b5b5b5" strokeWidth="2" />
          <path d="M9 4l3.500 3.500M11 5l3-3" stroke="#aaa" strokeWidth="3" />
        </svg>
      </button>
      <button aria-label="向上" className="flex h-4 items-center"><Chevron dir="up" color="#c4c4c4" /></button>
      <div className="min-h-0 w-[18px] flex-1 overflow-hidden border-x border-t border-[#555]">
        {paletteColors.map((c, i) => (
          <button
            key={i}
            aria-label={c}
            className={clsx(
              "block h-[17px] w-full border-b",
              c === "#f5b2b2" ? "border border-white" : "border-[#555]",
            )}
            style={{ background: c === "none" ? "#fff" : c }}
          >
            {c === "none" && <NoColor />}
          </button>
        ))}
      </div>
      <button aria-label="向下" className="flex h-4 items-center"><Chevron dir="down" color="#aaa" /></button>
      <button aria-label="展开" className="flex h-[24px] items-center pb-1">
        <svg width="10" height="8" viewBox="0 0 10 8" fill="none" stroke="#aaa" aria-hidden="true">
          <path d="M1 1l3 3-3 3M5 1l3 3-3 3" />
        </svg>
      </button>
    </aside>
  );
}

function StatusBar() {
  return (
    <footer className="flex h-[38px] flex-shrink-0 items-center border-t border-[#e4e4e4] pb-[2px] pl-[7px] pr-[11px] text-[13px] leading-5">
      <Tool label="自定义状态栏" flyout><GearIcon /></Tool>
      <p className="ml-[5px] w-[538px] whitespace-nowrap">
        双击工具可创建页面框架；按住<span className="text-[12px]"> Ctrl </span>键拖动可限制为方形；按住
        <span className="text-[12px]"> Shift </span>键拖动可从中心绘制
      </p>
      <p className="flex-1 whitespace-nowrap">
        矩形<span> </span>于<span> </span>图层<span className="text-[12px]"> 1</span>
      </p>
      <div className="flex w-[200px] items-center">
        <BucketIcon />
        <span className="ml-[2px] h-[22px] w-[22px] border border-[#888] bg-white">
          <svg width="20" height="20" viewBox="0 0 20 20" aria-hidden="true">
            <path d="M0 20L20 0" stroke="#c3202c" strokeWidth="1.500" />
          </svg>
        </span>
        <span className="ml-1">无</span>
      </div>
      <div className="flex items-center text-[11px]">
        <PenNibIcon />
        <span className="h-[21px] w-[21px] bg-[#231815]" />
        <span className="ml-[5px] w-[24px]">C:</span>
        <span className="w-[35px]">0 M:</span>
        <span className="w-[33px]">0 Y:</span>
        <span className="w-[33px]">0 K:</span>
        <span className="w-[91px]">100</span>
      </div>
      <button aria-label="文档颜色设置" className="relative z-30 flex">
        <Icon>
          <rect x=".7" y=".7" width="14.600" height="11.600" fill="#fff" stroke="#222" />
          <path d="M2 2h12v4H2z" fill="#e0112b" stroke="none" />
          <path d="M2 6h12v5H2z" fill="#1aa6b8" stroke="none" />
          <circle cx="8" cy="6.500" r="2" fill="#fff" stroke="#222" />
          <path d="M4 15h8M8 12v3" stroke="#222" />
        </Icon>
      </button>
    </footer>
  );
}

interface MenuEntry {
  label: string;
  k?: string;
  latin?: string;
  tail?: string;
  shortcut?: string;
  disabled?: boolean;
  shaded?: boolean;
  submenu?: boolean;
  current?: boolean;
  boxed?: boolean;
  icon?: ReactNode;
}

const contextMenu: MenuEntry[][] = [
  [
    { label: "转换为曲线", k: "V", shortcut: "Ctrl+Q", icon: <CurvesIcon /> },
    {
      label: "拆分",
      shortcut: "Ctrl+K",
      disabled: true,
      icon: (
        <Icon>
          <path d="M.7.700h9v9h-9zM7 10v5.300h8.300V6.500H10M11 4l4-3.500M12 .500h3v3M4 11l-3.500 4M.5 12v3.300h3" stroke="#bbb" strokeWidth="1.200" />
        </Icon>
      ),
    },
  ],
  [
    { label: "剪切", k: "T", shortcut: "Ctrl+X", shaded: true, icon: <CutIcon /> },
    { label: "复制", k: "C", shortcut: "Ctrl+C", shaded: true, icon: <CopyIcon /> },
    {
      label: "删除",
      k: "L",
      shortcut: "删除",
      icon: (
        <Icon>
          <path d="M1 1.500h4.500V0h5v1.500H15v2H1zM2.500 4.500h11L12.500 16h-9z" fill={DARK} stroke="none" />
          <path d="M6.300 6.500v7M9.700 6.500v7" stroke="#fff" />
        </Icon>
      ),
    },
  ],
  [{ label: "顺序", k: "O", submenu: true }],
  [
    {
      label: "隐藏",
      k: "H",
      icon: (
        <Icon>
          <path d="M.8 8Q8 .5 15.200 8 8 15.500.8 8zM1.500 2.500l13 11.500" strokeWidth="1.200" />
          <circle cx="8" cy="8" r="2.500" fill={DARK} stroke="none" />
        </Icon>
      ),
    },
    {
      label: "锁定",
      k: "L",
      icon: (
        <Icon>
          <path d="M4.500 8V4.500a3.500 3.500 0 0 1 7 0V8" />
          <rect x="2" y="8" width="12" height="8" fill={DARK} stroke="none" />
        </Icon>
      ),
    },
  ],
  [
    {
      label: "内部",
      latin: "PowerClip ",
      k: "P",
      tail: "...",
      disabled: true,
      icon: (
        <Icon>
          <path d="M.7 8h14.600v7.300H.7zM13.500 0v5M11 2.500h5" stroke="#bbb" />
          <ellipse cx="6" cy="4" rx="4" ry="1.500" stroke="#bbb" />
        </Icon>
      ),
    },
    { label: "框类型", k: "F", submenu: true },
  ],
  [
    {
      label: "创建新对称",
      k: "R",
      shortcut: "Alt+S",
      icon: (
        <Icon>
          <g strokeWidth="1">
            <circle cx="2.800" cy="5.500" r="2" />
            <circle cx="4" cy="9.500" r="2" />
            <circle cx="5.500" cy="13.500" r="2" />
            <circle cx="10.500" cy="13.500" r="2" />
            <circle cx="12" cy="9.500" r="2" />
            <circle cx="6.500" cy="3" r="2" />
          </g>
          <PlusBadge />
        </Icon>
      ),
    },
  ],
  [{ label: "创建新符号", k: "N", icon: <NewIcon /> }],
  [{ label: "因特网链接", k: "N", submenu: true }],
  [
    { label: "对象样式", k: "S", submenu: true },
    { label: "颜色样式", k: "R", submenu: true },
  ],
  [
    { label: "段落文本换行", k: "W", icon: <WrapIcon faded /> },
    {
      label: "连线换行",
      boxed: true,
      icon: (
        <Icon>
          <path d="M8 0v3h3.500v9.500H6V16" />
          <rect x="5" y="5.500" width="5" height="5" fill="#c87545" stroke="#5a2a12" />
        </Icon>
      ),
    },
  ],
  [
    { label: "叠印填充", k: "F", disabled: true },
    { label: "叠印轮廓", k: "O" },
    { label: "对象提示", k: "H" },
    {
      label: "与像素网格对齐",
      k: "G",
      icon: (
        <Icon>
          <path d="M4.500 9V4.500a3.500 3.500 0 0 1 7 0V9" stroke="#d8222a" strokeWidth="2" />
          <path d="M1 12h15M1 15h15" strokeDasharray="2 1" strokeWidth="2" />
        </Icon>
      ),
    },
  ],
  [{ label: "属性", shortcut: "Alt+Enter", current: true }],
];

function ContextMenuRow({ item }: { item: MenuEntry }) {
  return (
    <button
      role="menuitem"
      disabled={item.disabled}
      className={clsx("flex h-[22px] w-full items-center whitespace-nowrap text-left", item.disabled ? "text-[#bfbfbf]" : "text-black")}
    >
      <span
        className={clsx(
          "mx-[2px] flex w-full items-center",
          item.shaded ? "h-5 bg-[#bdbdbd]" : "h-[22px]",
          item.current && "bg-[#e5f1fb] ring-1 ring-inset ring-[#26a0da]",
        )}
      >
        <span
          className={clsx(
            "flex h-[22px] w-[22px] flex-shrink-0 items-center justify-center",
            item.boxed && "border border-[#bbb] bg-white",
          )}
        >
          {item.icon}
        </span>
        <span className="ml-2 pb-px">
          {item.latin && <span className="whitespace-pre text-[12px]">{item.latin}</span>}
          {item.label}
          {item.k && <Mnemonic k={item.k} />}
          {item.tail}
        </span>
        {item.shortcut && (
          <span className={clsx("ml-auto mr-[22px] pb-px", item.shortcut === "删除" ? "text-[13px]" : "text-[12px]")}>
            {item.shortcut}
          </span>
        )}
        {item.submenu && (
          <svg width="4" height="7" viewBox="0 0 4 7" className="ml-auto mr-[6px]" aria-hidden="true">
            <path d="M0 0l4 3.500L0 7z" fill="#666" />
          </svg>
        )}
      </span>
    </button>
  );
}

function ContextMenu() {
  return (
    <div
      role="menu"
      className="absolute bottom-0 left-[1048px] z-20 w-[202px] border border-[#a0a0a0] bg-[linear-gradient(to_right,#f3f3f3_25px,#fff_25px)] py-[2px] text-[13px] leading-5"
    >
      {contextMenu.map((group, i) => (
        <div key={i}>
          {i > 0 && (
            <div className="flex h-[7px] items-center pl-7 pr-[2px]">
              <span className="h-px w-full bg-[#d0d0d0]" />
            </div>
          )}
          {group.map((item) => (
            <ContextMenuRow key={item.label} item={item} />
          ))}
        </div>
      ))}
    </div>
  );
}

function ArrowOverlay() {
  return (
    <svg
      className="pointer-events-none absolute bottom-0 left-[990px] z-30"
      width="180"
      height="560"
      viewBox="990 480 180 560"
      aria-hidden="true"
    >
      <defs>
        <filter id="soft" x="-50%" y="-5%" width="200%" height="110%">
          <feGaussianBlur stdDeviation="2" />
        </filter>
      </defs>
      <path d="M1007 496L1087 995" stroke="#000" strokeOpacity=".45" strokeWidth="4" filter="url(#soft)" />
      <path d="M1003 494L1083 996" stroke="#c4161c" strokeWidth="4" strokeLinecap="round" />
      <path d="M1003 494L1083 996" stroke="#e8141c" strokeWidth="2" strokeLinecap="round" />
      <path d="M1086 1017L1076 991l7 3 12-6z" fill="#e8141c" />
      <path d="M1144.500 1022.500v15l3.500-3.500 3 6 2.500-1-3-6h5z" fill="#fff" stroke="#111" />
    </svg>
  );
}

function ImeBadge() {
  return (
    <div className="absolute bottom-[54px] left-[1273px] z-20 flex h-[27px] w-[62px] items-center justify-center gap-1 rounded-md border border-[#777] bg-white text-[13px] leading-5 text-[#333] shadow-md">
      <span className="font-['Liberation_Sans']">CH</span>
      <svg width="10" height="11" viewBox="0 0 11 11" fill="none" stroke="#333" aria-hidden="true">
        <path d="M5.500.5a5 5 0 0 1-4.500 8.500 5 5 0 0 0 9-2.500Q9.500 2 5.500.5z" />
      </svg>
      简
    </div>
  );
}

function SiteLogo() {
  return (
    <div className="pointer-events-none absolute bottom-[6px] right-[11px] z-20 flex items-center gap-[2px] opacity-75">
      <svg width="42" height="40" viewBox="0 0 44 42" aria-hidden="true">
        <path d="M3 30C-1 15 16 1 39 2 24 4 13 13 13 24q0 4 2 7Q7 33 3 30z" fill="#4a9be0" />
        <path d="M12 25C15 12 28 5 40 4 27 9 21 16 20 24z" fill="#8cc4ee" />
        <path d="M20 15q18-3 20 5-2 14-28 21 18-9 18-17 0-6-10-9z" fill="#4fb56a" />
        <path d="M4 38q18-1 25-12Q26 40 4 38z" fill="#d5d95a" />
      </svg>
      <div className="flex flex-col">
        <span className="text-[21px] font-bold leading-6 text-[#5a9fdc]">极光下载站</span>
        <span className="font-['Liberation_Sans'] text-[16px] font-bold leading-5 text-[#5cbf80]">www.xz7.com</span>
      </div>
    </div>
  );
}

export default function App() {
  return (
    <div className="relative flex h-screen flex-col overflow-hidden bg-[#f4f4f4] font-['Noto_Sans','Noto_Sans_CJK_SC',sans-serif] text-black">
      <TitleBar />
      <MenuBar />
      <StandardBar />
      <PropertyBar />
      <div className="flex min-h-0 flex-1">
        <Toolbox />
        <div className="flex min-w-0 flex-1 flex-col">
          <DocTabs />
          <HorizontalRuler />
          <div className="flex min-h-0 flex-1">
            <VerticalRuler />
            <Canvas />
            <VerticalScroll />
          </div>
          <PageBar />
          <DocPalette />
        </div>
        <ColorPalette />
      </div>
      <StatusBar />
      <ContextMenu />
      <ImeBadge />
      <SiteLogo />
      <ArrowOverlay />
    </div>
  );
}
